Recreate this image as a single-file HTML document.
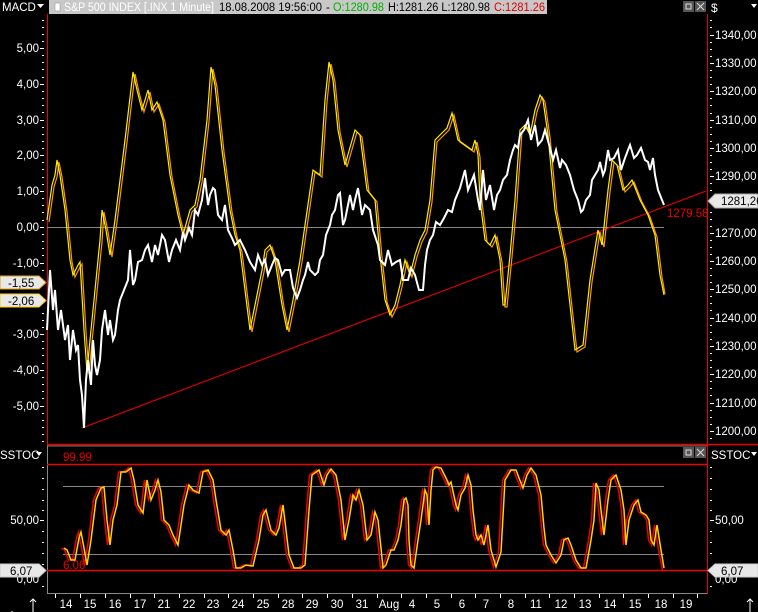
<!DOCTYPE html>
<html><head><meta charset="utf-8"><style>
html,body{margin:0;padding:0;background:#000;}
svg{display:block;font-family:"Liberation Sans",sans-serif;}
</style></head><body>
<svg width="758" height="612" viewBox="0 0 758 612" xmlns="http://www.w3.org/2000/svg">
<rect width="758" height="612" fill="#000"/>
<!-- top bar -->
<rect x="49" y="0" width="498" height="14" fill="#c8c8c8"/>
<rect x="55" y="3" width="5" height="8" fill="#fff" stroke="#888" stroke-width="0.5"/>
<text x="64" y="11" font-size="11.5" fill="#fff" textLength="150" lengthAdjust="spacingAndGlyphs">S&amp;P 500 INDEX [.INX  1 Minute]</text>
<text x="219" y="11" font-size="11.5" fill="#000" textLength="103" lengthAdjust="spacingAndGlyphs">18.08.2008 19:56:00</text>
<text x="326" y="11" font-size="11.5" fill="#000">-</text>
<text x="333" y="11" font-size="11.5" fill="#00b000" textLength="51" lengthAdjust="spacingAndGlyphs">O:1280.98</text>
<text x="388" y="11" font-size="11.5" fill="#000" textLength="102" lengthAdjust="spacingAndGlyphs">H:1281.26 L:1280.98</text>
<text x="494" y="11" font-size="11.5" fill="#e00000" textLength="51" lengthAdjust="spacingAndGlyphs">C:1281.26</text>
<text x="2" y="11" font-size="11.5" fill="#fff">MACD</text>
<path d="M37 4h7l-3.5 4z" fill="#fff"/>
<!-- window buttons -->
<rect x="683" y="1" width="11" height="11" fill="#555"/><rect x="686" y="4" width="5" height="5" fill="none" stroke="#ddd"/>
<rect x="695" y="1" width="11" height="11" fill="#555"/><path d="M697 3l7 7M704 3l-7 7" stroke="#ddd"/>
<rect x="683" y="447" width="11" height="11" fill="#555"/><rect x="686" y="450" width="5" height="5" fill="none" stroke="#ddd"/>
<rect x="695" y="447" width="11" height="11" fill="#555"/><path d="M697 449l7 7M704 449l-7 7" stroke="#ddd"/>
<text x="711" y="12" font-size="12" fill="#fff">$</text>
<path d="M751 4h6l-3 4z" fill="#fff"/>
<!-- vertical axis lines -->
<line x1="47.5" y1="14" x2="47.5" y2="445" stroke="#e00" />
<line x1="47.5" y1="445" x2="47.5" y2="594" stroke="#888" />
<line x1="707.5" y1="14" x2="707.5" y2="594" stroke="#e00" />
<line x1="47" y1="593.5" x2="707" y2="593.5" stroke="#888"/>
<!-- ticks -->
<g stroke="#fff" stroke-width="1">
<path d="M42 20.5h2M42 27.5h2M42 34.5h2M42 41.5h2M40 48.5h4M42 55.5h2M42 62.5h2M42 69.5h2M42 77.5h2M40 84.5h4M42 91.5h2M42 98.5h2M42 105.5h2M42 112.5h2M40 120.5h4M42 127.5h2M42 134.5h2M42 141.5h2M42 148.5h2M40 155.5h4M42 162.5h2M42 169.5h2M42 177.5h2M42 184.5h2M40 191.5h4M42 198.5h2M42 205.5h2M42 212.5h2M42 220.5h2M40 227.5h4M42 234.5h2M42 241.5h2M42 248.5h2M42 255.5h2M40 263.5h4M42 270.5h2M42 313.5h2M42 320.5h2M42 327.5h2M40 334.5h4M42 341.5h2M42 348.5h2M42 355.5h2M42 363.5h2M40 370.5h4M42 377.5h2M42 384.5h2M42 391.5h2M42 398.5h2M40 406.5h4M42 413.5h2M42 420.5h2M42 427.5h2M42 434.5h2M42 441.5h2"/>
<path d="M42 467.5h2M42 478.5h2M42 489.5h2M42 500.5h2M42 510.5h2M40 520.5h4M42 531.5h2M42 542.5h2M42 553.5h2M42 564.5h2M42 586.5h2"/>
<path d="M710 20.5h2M710 27.5h2M710 35.5h4M710 42.5h2M710 49.5h2M710 56.5h2M710 63.5h4M710 70.5h2M710 77.5h2M710 84.5h2M710 91.5h4M710 98.5h2M710 105.5h2M710 113.5h2M710 120.5h4M710 127.5h2M710 134.5h2M710 141.5h2M710 148.5h4M710 155.5h2M710 162.5h2M710 169.5h2M710 176.5h4M710 183.5h2M710 190.5h2M710 212.5h2M710 219.5h2M710 226.5h2M710 233.5h4M710 240.5h2M710 247.5h2M710 254.5h2M710 261.5h4M710 268.5h2M710 275.5h2M710 282.5h2M710 289.5h4M710 296.5h2M710 303.5h2M710 310.5h2M710 318.5h4M710 325.5h2M710 332.5h2M710 339.5h2M710 346.5h4M710 353.5h2M710 360.5h2M710 367.5h2M710 374.5h4M710 381.5h2M710 388.5h2M710 395.5h2M710 403.5h4M710 410.5h2M710 417.5h2M710 424.5h2M710 431.5h4M710 438.5h2"/>
<path d="M710 467.5h2M710 478.5h2M710 489.5h2M710 500.5h2M710 510.5h2M710 520.5h4M710 531.5h2M710 542.5h2M710 553.5h2M710 586.5h2"/>
</g>
<g font-size="11.5" fill="#fff" text-anchor="end">
<text x="39" y="52">5,00</text><text x="39" y="88">4,00</text><text x="39" y="124">3,00</text><text x="39" y="159">2,00</text><text x="39" y="195">1,00</text><text x="39" y="231">0,00</text><text x="39" y="267">-1,00</text><text x="39" y="338">-3,00</text><text x="39" y="374">-4,00</text><text x="39" y="410">-5,00</text>
<text x="39" y="524">50,00</text><text x="39" y="583">0,00</text>
</g>
<g font-size="11.5" fill="#fff">
<text x="715" y="39">1340,00</text><text x="715" y="67">1330,00</text><text x="715" y="95">1320,00</text><text x="715" y="124">1310,00</text><text x="715" y="152">1300,00</text><text x="715" y="180">1290,00</text><text x="715" y="237">1270,00</text><text x="715" y="265">1260,00</text><text x="715" y="293">1250,00</text><text x="715" y="322">1240,00</text><text x="715" y="350">1230,00</text><text x="715" y="378">1220,00</text><text x="715" y="407">1210,00</text><text x="715" y="435">1200,00</text>
<text x="715" y="524">50,00</text><text x="715" y="583">0,00</text>
<text x="711" y="459">SSTOC</text>
<text x="0" y="459">SSTOC</text>
</g>
<path d="M36 452h6l-3 4z" fill="#fff"/>
<path d="M751 452h6l-3 4z" fill="#fff"/>
<line x1="47" y1="227.5" x2="664" y2="227.5" stroke="#888"/>
<line x1="82" y1="428" x2="706" y2="191" stroke="#e00"/>
<text x="667" y="217" font-size="11.5" fill="#e00">1279.58</text>
<!-- MACD lines -->
<polyline fill="none" stroke="#ff9800" stroke-width="1.2" transform="translate(2,2)" points="47,220 52,185 55,175 57,160 60,175 65,210 70,260 73,275 78,265 80,262 84,330 87,372 90,340 95,290 100,240 102,210 106,230 110,255 115,220 120,180 125,140 133,72 137,90 142,110 148,90 152,110 157,102 163,120 170,175 178,215 183,235 190,210 195,205 200,180 207,120 211,67 215,85 222,150 230,210 235,235 240,250 250,330 255,305 262,270 265,250 270,245 275,260 282,305 287,330 293,300 300,260 305,225 313,170 320,175 325,100 329,62 333,80 338,130 345,165 355,130 360,135 367,190 375,200 380,255 385,300 390,315 395,305 400,285 405,260 410,275 415,255 420,240 425,230 430,200 435,140 440,135 447,128 452,113 458,140 465,145 472,150 475,140 478,155 480,200 485,240 490,245 495,235 500,260 503,305 505,305 510,255 515,200 520,130 525,125 530,135 535,110 540,95 543,100 548,135 555,210 560,235 565,260 575,350 583,345 590,280 598,230 602,245 608,190 612,160 617,165 623,190 628,185 632,180 640,200 648,215 655,235 660,275 663,292"/>
<polyline fill="none" stroke="#ffee00" stroke-width="1.2" points="47,220 52,185 55,175 57,160 60,175 65,210 70,260 73,275 78,265 80,262 84,330 87,372 90,340 95,290 100,240 102,210 106,230 110,255 115,220 120,180 125,140 133,72 137,90 142,110 148,90 152,110 157,102 163,120 170,175 178,215 183,235 190,210 195,205 200,180 207,120 211,67 215,85 222,150 230,210 235,235 240,250 250,330 255,305 262,270 265,250 270,245 275,260 282,305 287,330 293,300 300,260 305,225 313,170 320,175 325,100 329,62 333,80 338,130 345,165 355,130 360,135 367,190 375,200 380,255 385,300 390,315 395,305 400,285 405,260 410,275 415,255 420,240 425,230 430,200 435,140 440,135 447,128 452,113 458,140 465,145 472,150 475,140 478,155 480,200 485,240 490,245 495,235 500,260 503,305 505,305 510,255 515,200 520,130 525,125 530,135 535,110 540,95 543,100 548,135 555,210 560,235 565,260 575,350 583,345 590,280 598,230 602,245 608,190 612,160 617,165 623,190 628,185 632,180 640,200 648,215 655,235 660,275 664,295"/>
<!-- price line -->
<polyline fill="none" stroke="#fff" stroke-width="2" points="47,330 50,270 53,310 55,290 58,330 61,310 65,340 68,325 70,360 73,330 76,350 78,345 80,380 82,395 84,428 86,380 88,360 91,385 93,340 95,365 97,375 100,360 102,330 105,310 108,335 110,320 113,340 115,335 118,310 120,300 124,290 128,280 130,250 133,285 135,280 138,262 142,260 145,250 148,245 152,262 155,245 158,255 162,235 165,240 169,262 172,250 176,240 180,250 183,232 185,240 189,228 192,235 195,210 198,215 202,200 205,178 208,205 210,195 213,188 215,190 218,215 222,220 225,205 228,230 232,238 235,245 240,240 245,250 250,262 255,270 258,255 262,265 265,260 268,275 272,265 275,258 278,260 282,275 285,270 290,270 293,288 297,298 300,290 303,280 305,275 308,262 310,270 315,275 318,272 320,260 323,255 326,235 330,225 332,215 335,210 338,195 340,193 343,225 345,220 348,205 350,195 353,210 355,200 358,188 362,215 365,205 370,210 373,230 378,245 380,260 385,265 388,250 392,265 396,262 400,260 403,280 408,280 411,268 415,275 419,290 423,290 425,265 427,250 430,240 433,235 436,222 440,225 444,218 448,210 452,212 455,200 460,188 465,170 468,190 470,185 474,175 478,200 480,210 483,170 486,200 490,185 494,210 497,195 500,190 503,180 507,175 510,160 513,150 515,145 518,148 520,135 524,130 528,120 531,140 535,125 538,145 542,140 545,130 550,148 553,160 556,150 560,168 562,160 566,165 570,175 574,190 578,200 581,212 583,210 586,200 590,195 592,180 595,175 598,170 600,162 603,175 605,170 608,150 610,160 614,158 618,150 621,170 625,158 628,150 630,145 634,158 637,155 641,148 645,160 648,162 650,170 653,158 655,175 658,190 660,195 662,200 664,205"/>
<path d="M708 201 L715 194 H758 V208 H715 Z" fill="#e8e8e8" stroke="#aaa"/>
<text x="721" y="205" font-size="11.5" fill="#000">1281,26</text>
<path d="M0 276 H39 L46 282.5 L39 289 H0 Z" fill="#e8e8e8" stroke="#e6a000"/>
<text x="8" y="287" font-size="11.5" fill="#000">-1,55</text>
<path d="M0 294 H39 L46 300.5 L39 307 H0 Z" fill="#e8e8e8" stroke="#ffd000"/>
<text x="8" y="305" font-size="11.5" fill="#000">-2,06</text>
<line x1="47" y1="444.5" x2="758" y2="444.5" stroke="#e00" stroke-width="1.5"/>
<line x1="47" y1="446" x2="707" y2="446" stroke="#777" stroke-width="1"/>
<line x1="47" y1="464.5" x2="707" y2="464.5" stroke="#e00" stroke-width="1.5"/>
<line x1="47" y1="570.5" x2="707" y2="570.5" stroke="#e00" stroke-width="1.5"/>
<line x1="63" y1="486.5" x2="664" y2="486.5" stroke="#888"/>
<line x1="63" y1="554.5" x2="664" y2="554.5" stroke="#888"/>
<text x="63" y="461" font-size="11.5" fill="#e00">99.99</text>
<text x="63" y="569" font-size="11.5" fill="#e00">6.06</text>
<polyline fill="none" stroke="#ee0000" stroke-width="1.5" transform="translate(-1.5,0)" points="63,548 66,550 70,560 74,560 78,538 80,532 83,548 86,565 90,540 95,500 100,488 103,487 106,520 109,545 112,520 116,505 120,472 125,472 130,468 133,480 137,505 142,513 146,480 150,500 154,490 157,480 160,492 163,520 168,525 172,535 177,545 183,505 188,485 192,490 198,493 202,472 207,470 212,480 215,500 220,530 225,535 228,530 232,550 235,568 240,568 245,565 252,566 258,540 262,515 265,510 270,530 275,535 278,528 282,505 285,530 288,555 293,568 300,568 304,565 308,510 311,475 318,470 323,485 326,475 330,469 335,475 340,500 344,540 348,520 352,495 355,500 358,490 362,505 366,540 370,535 374,512 377,520 380,548 382,568 385,565 390,550 393,550 397,540 400,525 403,500 405,498 407,505 408,540 410,565 413,568 417,540 420,520 422,505 424,490 426,495 428,525 430,490 432,470 435,467 440,468 445,478 448,485 450,482 455,505 457,510 460,495 464,488 467,475 470,485 472,510 475,535 477,540 480,535 483,545 487,525 490,550 495,567 500,552 504,480 510,470 515,470 518,478 522,488 526,475 530,468 535,475 540,495 543,528 545,545 550,555 555,563 560,555 563,540 567,538 570,545 575,560 580,568 585,568 590,540 593,520 595,483 598,490 600,510 603,535 607,500 610,480 615,475 620,490 623,510 625,545 628,520 633,505 637,500 640,512 645,515 648,520 650,540 653,545 656,525 660,550 664,570"/>
<polyline fill="none" stroke="#ffd400" stroke-width="1.5" transform="translate(1,0)" points="63,548 66,550 70,560 74,560 78,538 80,532 83,548 86,565 90,540 95,500 100,488 103,487 106,520 109,545 112,520 116,505 120,472 125,472 130,468 133,480 137,505 142,513 146,480 150,500 154,490 157,480 160,492 163,520 168,525 172,535 177,545 183,505 188,485 192,490 198,493 202,472 207,470 212,480 215,500 220,530 225,535 228,530 232,550 235,568 240,568 245,565 252,566 258,540 262,515 265,510 270,530 275,535 278,528 282,505 285,530 288,555 293,568 300,568 304,565 308,510 311,475 318,470 323,485 326,475 330,469 335,475 340,500 344,540 348,520 352,495 355,500 358,490 362,505 366,540 370,535 374,512 377,520 380,548 382,568 385,565 390,550 393,550 397,540 400,525 403,500 405,498 407,505 408,540 410,565 413,568 417,540 420,520 422,505 424,490 426,495 428,525 430,490 432,470 435,467 440,468 445,478 448,485 450,482 455,505 457,510 460,495 464,488 467,475 470,485 472,510 475,535 477,540 480,535 483,545 487,525 490,550 495,567 500,552 504,480 510,470 515,470 518,478 522,488 526,475 530,468 535,475 540,495 543,528 545,545 550,555 555,563 560,555 563,540 567,538 570,545 575,560 580,568 585,568 590,540 593,520 595,483 598,490 600,510 603,535 607,500 610,480 615,475 620,490 623,510 625,545 628,520 633,505 637,500 640,512 645,515 648,520 650,540 653,545 656,525 660,550 663,568"/>
<path d="M0 564 H39 L46 570.5 L39 577 H0 Z" fill="#e8e8e8" stroke="#ccc"/>
<text x="10" y="575" font-size="11.5" fill="#000">6,07</text>
<path d="M708 570.5 L715 564 H758 V577 H715 Z" fill="#e8e8e8" stroke="#ccc"/>
<text x="721" y="575" font-size="11.5" fill="#000">6,07</text>
<g stroke="#fff">
<path d="M55.5 594v4M80.5 594v4M105.5 594v4M130.5 594v4M154.5 594v4M179.5 594v4M204.5 594v4M228.5 594v4M253.5 594v4M278.5 594v4M302.5 594v4M327.5 594v4M352.5 594v4M377.5 594v4M401.5 594v4M426.5 594v4M451.5 594v4M475.5 594v4M500.5 594v4M525.5 594v4M549.5 594v4M574.5 594v4M599.5 594v4M623.5 594v4M648.5 594v4M673.5 594v4M697.5 594v4"/>
</g>
<g font-size="11.5" fill="#fff" text-anchor="middle">
<text x="66" y="608">14</text><text x="90" y="608">15</text><text x="115" y="608">16</text><text x="140" y="608">17</text><text x="164" y="608">21</text><text x="189" y="608">22</text><text x="213" y="608">23</text><text x="238" y="608">24</text><text x="263" y="608">25</text><text x="288" y="608">28</text><text x="312" y="608">29</text><text x="337" y="608">30</text><text x="362" y="608">31</text><text x="389" y="608">Aug</text><text x="412" y="608">4</text><text x="437" y="608">5</text><text x="462" y="608">6</text><text x="486" y="608">7</text><text x="511" y="608">8</text><text x="536" y="608">11</text><text x="561" y="608">12</text><text x="585" y="608">13</text><text x="610" y="608">14</text><text x="635" y="608">15</text><text x="661" y="608">18</text><text x="686" y="608">19</text>
</g>
<path d="M33 612V599M30 602l3-3 3 3" stroke="#fff" fill="none"/>
<path d="M750 612V599M747 602l3-3 3 3" stroke="#fff" fill="none"/>
<path d="M11 612h2" stroke="#fff"/>
</svg>
</body></html>
